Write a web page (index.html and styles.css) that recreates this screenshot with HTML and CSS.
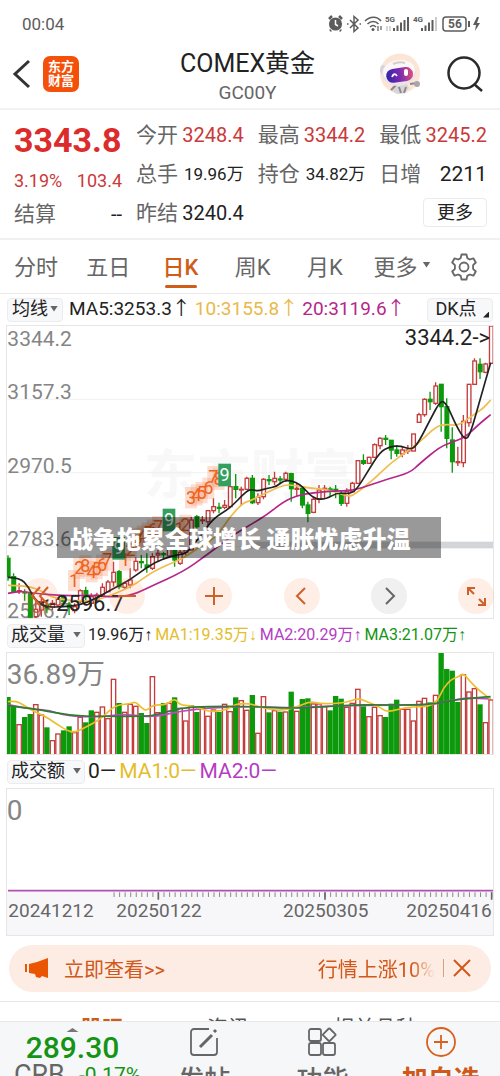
FILE: index.html
```html
<!DOCTYPE html>
<html lang="zh-CN">
<head>
  <meta charset="UTF-8" />
  <meta name="viewport" content="width=device-width, initial-scale=1.0"/>
  <title>COMEX黄金 GC00Y</title>
  <link rel="stylesheet" href="styles.css">
</head>
<body>
<div class="app">

  <!-- Status bar -->
  <div class="status">
    <span class="clock">00:04</span>
    <svg class="status-icons" width="154" height="18" viewBox="0 0 154 18" fill="none" stroke="#5c5c5c" stroke-width="1.5">
      <circle cx="7.500" cy="9" r="5.800" fill="#5c5c5c"/>
      <path d="M1 4l3-3M14 4l-3-3M3 15l-1 1M12 15l1 1" stroke-width="2.500"/>
      <path d="M7.500 5v4.500l2.500 1.500" stroke="#fff"/>
      <path d="M22 5l8 8-4 3.500V1.500l4 3.500-8 8M19 9h1.500M31.500 9h1.500"/>
      <path d="M37 6c5-5 12-5 16 0M39.500 9c3.500-3.500 8-3.500 11 0M42 12c2-2 4-2 6 0"/>
      <circle cx="45" cy="14.500" r="1.500" fill="#5c5c5c" stroke="none"/>
      <path d="M50 11v5M53 11v4" stroke-width="1.200"/>
      <text x="57" y="7">5G</text>
      <path d="M59 11v5M62 11v5" stroke="#bbb" stroke-width="1.200"/>
      <path d="M66 13v3M69.500 10.500V16M73 7.500V16M76.500 5V16M80 2V16" stroke-width="2"/>
      <text x="85" y="7">4G</text>
      <path d="M94 13v3M97.500 10.500V16M101 7.500V16M104.500 5V16" stroke-width="2"/>
      <path d="M108 2V16" stroke="#ccc" stroke-width="2"/>
      <rect x="115" y="2" width="23" height="14" rx="3"/>
      <text class="battery" x="120" y="13">56</text>
      <path d="M141 6v6" stroke-width="2"/>
      <path d="M149 2l-4 8h3l-1 6 5-8h-3l2-6z" fill="#5c5c5c" stroke="none"/>
    </svg>
  </div>

  <!-- Header -->
  <header class="header">
    <div class="header-side">
      <button class="icon-btn" aria-label="返回">
        <svg width="20" height="32" viewBox="0 0 20 32" fill="none" stroke="#333" stroke-width="3"><path d="M17 3L3 16l14 13"/></svg>
      </button>
      <span class="logo">东方<br>财富</span>
    </div>
    <div class="title">
      <h1>COMEX黄金</h1>
      <p>GC00Y</p>
    </div>
    <div class="header-side right">
      <button class="icon-btn" aria-label="智能助手">
        <svg width="42" height="42" viewBox="0 0 42 42">
          <defs>
            <linearGradient id="visor" x1="0" y1="0" x2="1" y2="0">
              <stop offset="0" stop-color="#3422a8"/>
              <stop offset="0.500" stop-color="#7a2ab0"/>
              <stop offset="1" stop-color="#e0507c"/>
            </linearGradient>
          </defs>
          <circle cx="21" cy="20.500" r="20" fill="#fde5d6"/>
          <path d="M14 33l5-3 9 1 2 4-4 5-8 1-5-3z" fill="#d8d5d8"/>
          <path d="M12 37l6-6M31 31l7-1M20 34l2 6M27 34l-2 6" stroke="#8c8890" stroke-width="2"/>
          <ellipse cx="4" cy="17" rx="3" ry="5" fill="#d9d3da"/>
          <ellipse cx="20" cy="20" rx="17" ry="13" transform="rotate(-8 20 20)" fill="#e9e3e7"/>
          <ellipse cx="20" cy="18" rx="16" ry="11" transform="rotate(-8 20 18)" fill="#faf7f8"/>
          <path d="M14 11q6-3 12-1" stroke="#d9cdbf" stroke-width="2" fill="none"/>
          <rect x="7" y="15" width="27" height="14" rx="7" transform="rotate(-8 20 21)" fill="url(#visor)"/>
          <path d="M13 24q2-5 5-1" stroke="#fff" stroke-width="1.800" fill="none"/>
          <rect x="25" y="16" width="4" height="7" rx="2" fill="#fff"/>
          <circle cx="38" cy="31" r="3" fill="#aaa6ac"/>
        </svg>
      </button>
      <button class="icon-btn" aria-label="搜索">
        <svg width="36" height="36" viewBox="0 0 36 36" fill="none" stroke="#2b2b2b" stroke-width="2.500"><circle cx="17" cy="17" r="15.500"/><path d="M27 28l8 7"/></svg>
      </button>
    </div>
  </header>

  <!-- Quote -->
  <section class="quote">
    <div class="quote-main">
      <div class="price">3343.8</div>
      <div class="change"><span>3.19%</span><span>103.4</span></div>
      <div class="cell"><span class="label">结算</span><span class="value">--</span></div>
    </div>
    <div class="quote-grid">
      <div class="cell"><span class="label">今开</span><span class="value up">3248.4</span></div>
      <div class="cell"><span class="label">最高</span><span class="value up">3344.2</span></div>
      <div class="cell"><span class="label">最低</span><span class="value up">3245.2</span></div>
      <div class="cell"><span class="label">总手</span><span class="value small">19.96万</span></div>
      <div class="cell"><span class="label">持仓</span><span class="value small">34.82万</span></div>
      <div class="cell"><span class="label">日增</span><span class="value large">2211</span></div>
      <div class="cell"><span class="label">昨结</span><span class="value">3240.4</span></div>
      <button class="more">更多</button>
    </div>
  </section>

  <!-- Period tabs -->
  <nav class="periods">
    <button>分时</button>
    <button>五日</button>
    <button class="active">日K</button>
    <button>周K</button>
    <button>月K</button>
    <button class="wide">更多<i class="caret"></i></button>
    <button class="gear" aria-label="设置">
      <svg width="28" height="28" viewBox="0 0 28 28" fill="none" stroke="#666" stroke-width="1.800" stroke-linejoin="round">
        <path d="M11.500 1.500h5l.8 3.600 2.500 1.400 3.600-1.200 2.400 4.200-2.700 2.600v3.800l2.700 2.600-2.400 4.200-3.600-1.200-2.500 1.400-.8 3.600h-5l-.8-3.600-2.500-1.400-3.600 1.200-2.400-4.200 2.700-2.600v-3.800L2.200 9.500l2.400-4.200 3.600 1.200 2.500-1.400z"/>
        <circle cx="14" cy="14" r="4.500"/>
      </svg>
    </button>
  </nav>

  <!-- Price chart -->
  <div class="bar">
    <button class="pill">均线<i class="caret"></i></button>
    <span>MA5:3253.3↑</span>
    <span class="yellow">10:3155.8↑</span>
    <span class="magenta">20:3119.6↑</span>
    <button class="pill dk">DK点<i class="corner"></i></button>
  </div>
  <div class="chart">
    <svg id="price-chart" viewBox="18 15 1464 882">
      <text class="watermark" x="432" y="522">东方财富</text>
      <path class="grid-line" d="M18 238H1482M18 458H1482M18 680H1482"/>
      <rect x="750" y="665" width="732" height="20" fill="#d3d6d9"/>
      <g class="scale">
        <text x="22" y="77">3344.2</text>
        <text x="22" y="238">3157.3</text>
        <text x="22" y="458">2970.5</text>
        <text x="22" y="679">2783.6</text>
        <text x="22" y="893">2596.7</text>
      </g>
      <g id="candles"></g>
      <g id="price-lines"></g>
      <g id="signals"></g>
      <text class="mark" x="1470" y="75" text-anchor="end">3344.2-&gt;</text>
      <text class="mark" x="116" y="874">&lt;-2596.7</text>
    </svg>
    <div class="chart-tools">
      <button aria-label="快退"><svg viewBox="0 0 36 36"><path d="M18 9l-8 9 8 9M26 9l-8 9 8 9"/></svg></button>
      <button aria-label="缩小"><svg viewBox="0 0 36 36"><path d="M9 18h18"/></svg></button>
      <button aria-label="放大"><svg viewBox="0 0 36 36"><path d="M9 18h18M18 9v18"/></svg></button>
      <button aria-label="左移"><svg viewBox="0 0 36 36"><path d="M21 10l-8 8 8 8"/></svg></button>
      <button class="gray" aria-label="右移"><svg viewBox="0 0 36 36"><path d="M15 10l8 8-8 8"/></svg></button>
      <button aria-label="全屏"><svg viewBox="0 0 36 36"><path d="M10 17v-7h7M10 10l6 6M27 20v7h-7M27 27l-6-6"/></svg></button>
    </div>
    <div class="caption">战争拖累全球增长 通胀忧虑升温</div>
  </div>

  <!-- Volume -->
  <div class="bar volume-bar">
    <button class="pill wide">成交量<i class="caret"></i></button>
    <span>19.96万<b>↑</b></span>
    <span class="gold">MA1:19.35万<b>↓</b></span>
    <span class="violet">MA2:20.29万<b>↑</b></span>
    <span class="green">MA3:21.07万<b>↑</b></span>
  </div>
  <div class="chart">
    <svg id="volume-chart" viewBox="18 97 1464 310">
      <g id="volumes"></g>
      <g id="volume-lines"></g>
      <text class="scale-big" x="20" y="193">36.89万</text>
    </svg>
  </div>

  <!-- Turnover -->
  <div class="bar amount-bar">
    <button class="pill wide">成交额<i class="caret"></i></button>
    <span>0—</span>
    <span class="gold">MA1:0—</span>
    <span class="violet">MA2:0—</span>
  </div>
  <div class="chart">
    <svg id="amount-chart" viewBox="18 25 1464 443">
      <rect x="18" y="334" width="1464" height="134" fill="#f7f7fa"/>
      <path d="M24 333H1482" stroke="#b050b0" stroke-width="5"/>
      <text class="scale-big" x="20" y="121">0</text>
      <g id="ticks"></g>
      <g class="dates">
        <text x="25" y="412">20241212</text>
        <text x="349" y="412">20250122</text>
        <text x="849" y="412">20250305</text>
        <text x="1475" y="412" text-anchor="end">20250416</text>
      </g>
    </svg>
  </div>

  <!-- Notice -->
  <div class="notice">
    <svg width="26" height="22" viewBox="0 0 26 22" fill="#ea5504"><path d="M1 7h2v8H1zM5 7l8-2 11-4v20l-6-2-2 2-4-1-1-3-6-1z"/></svg>
    <a href="#">立即查看&gt;&gt;</a>
    <span class="notice-text">行情上涨10%</span>
    <button class="icon-btn close" aria-label="关闭">
      <svg width="18" height="18" viewBox="0 0 18 18" stroke="#d0581a" stroke-width="2"><path d="M1 1l16 16M17 1L1 17"/></svg>
    </button>
  </div>

  <nav class="sections">
    <a class="active" href="#">股吧</a>
    <a href="#">资讯</a>
    <a href="#">相关品种</a>
  </nav>

  <!-- Bottom bar -->
  <footer class="bottom">
    <div class="index">
      <i class="up-caret"></i>
      <div class="index-value">289.30</div>
      <div class="index-row"><span>CRB</span><span class="pct">-0.17%</span></div>
    </div>
    <button>
      <svg width="30" height="30" viewBox="0 0 30 30" fill="none" stroke="#666" stroke-width="1.800"><path d="M20 2H5a3 3 0 0 0-3 3v20a3 3 0 0 0 3 3h20a3 3 0 0 0 3-3V11"/><path d="M11 20L23 8M25 5l2-2" stroke-width="3"/></svg>
      发帖
    </button>
    <button>
      <svg width="30" height="30" viewBox="0 0 30 30" fill="none" stroke="#666" stroke-width="1.800"><rect x="2" y="2" width="12" height="12" rx="2"/><rect x="2" y="16" width="12" height="12" rx="2"/><rect x="16" y="16" width="12" height="12" rx="2"/><rect x="17.500" y="3" width="9.500" height="9.500" rx="1" transform="rotate(45 22.250 7.750)"/></svg>
      功能
    </button>
    <button class="add">
      <svg width="30" height="30" viewBox="0 0 30 30" fill="none" stroke="#d9601f" stroke-width="1.800"><circle cx="15" cy="15" r="14"/><path d="M8 15h14M15 8v14"/></svg>
      加自选
    </button>
  </footer>
</div>

<script>
  const GREEN = '#0c9a0c';
  const RED = '#c43c3c';
  const STEP = 16.66;

  // g = down, r = up; high, body top, body bottom, low
  const candles = `g 706 715 770 782|g 760 770 815 818|r 790 812 814 822|g 808 817 819 842|g 815 820 895 895|r 840 868 890 898
r 835 845 870 890|g 845 855 865 880|r 840 850 862 870|r 832 838 855 860|g 828 832 845 860|g 845 855 862 885|r 850 860 872 880
r 808 812 845 850|g 800 812 830 845|r 820 830 850 860|r 818 825 840 845|r 790 802 825 830|r 780 786 815 815|r 725 757 786 800
g 750 755 800 808|r 785 790 802 810|r 745 780 795 805|r 712 724 750 755|g 705 725 728 745|g 700 735 742 758|r 700 710 745 750
r 690 700 705 725|g 695 701 704 720|r 680 688 708 710|g 680 688 720 740|r 690 697 730 735|r 685 690 697 705|r 590 600 690 690
g 585 590 620 630|r 588 600 602 612|r 570 572 605 615|r 535 560 572 580|g 548 562 565 580|r 540 556 562 568|r 498 500 560 565
g 462 500 508 535|r 500 508 510 558|r 470 475 508 510|g 465 475 548 552|r 520 532 548 555|r 475 478 530 538|g 465 479 482 495
r 455 475 485 495|g 468 477 480 490|r 455 460 478 485|g 458 461 506 545|r 490 505 508 530|g 500 505 555 565|g 545 555 580 607
r 530 538 577 580|r 495 510 538 550|r 495 505 508 535|g 500 507 510 530|g 495 508 512 535|g 510 520 550 558|r 505 515 550 560
r 485 490 515 515|r 422 422 490 490|g 403 422 430 435|r 410 412 430 430|r 370 374 412 412|r 352 355 377 388|g 345 355 358 375
g 360 361 390 418|g 375 390 400 410|r 380 390 402 412|r 375 390 393 402|r 342 342 393 393|r 278 284 307 307|r 235 238 284 290
g 215 238 245 270|r 187 198 250 255|g 193 193 260 335|g 235 260 355 385|g 322 360 425 458|r 380 425 428 438|r 285 304 428 442
r 193 193 308 320|r 115 123 193 193|g 115 133 155 177|r 128 132 157 160|r 18 18 130 130`.split(/[|\n]/);

  const volumes = `g232 g262 r314 g292 g283 r254 r285 g323 r362 r342 g332 g320 r338 r292 g308 g272 r277 r261 r296 r178 g250 r277
r253 r259 g280 g310 r170 r278 g250 r250 g233 r265 r303 r258 g277 r262 r289 r270 g277 r253 r275 g233 r242 r271
g226 r340 r230 g278 r272 g276 r276 g216 r274 g238 g236 r252 r252 r260 g272 g229 g237 r262 r250 r208 g260 r290
r262 r287 g292 g252 g240 r268 r268 r303 r244 r235 g248 r226 g99 g148 g153 g247 r164 r216 r206 g254 r308 r240`.split(/\s+/);

  const priceLines = {
    '#f0bd4e': '24,796 80,796 130,815 160,835 250,845 310,835 370,810 410,790 450,760 500,735 550,715 600,680 650,650 690,590 730,548 750,543 800,518 850,495 880,495 930,505 980,508 1010,518 1050,530 1065,522 1120,480 1170,430 1230,388 1260,365 1310,318 1340,313 1375,317 1420,285 1450,265 1472,240',
    '#b5268c': '24,820 60,812 100,820 200,828 280,825 340,832 400,825 450,800 550,755 620,705 700,645 750,615 800,585 850,545 890,527 940,518 1000,513 1060,512 1110,495 1160,478 1230,458 1260,430 1320,380 1360,365 1395,352 1440,310 1472,284',
    '#222': '24,772 60,773 85,800 105,840 140,862 190,860 240,855 290,835 340,805 390,780 440,742 490,715 540,703 560,700 600,650 640,595 690,565 740,512 757,509 775,513 800,505 830,500 855,478 900,490 940,538 980,537 1010,518 1050,522 1070,508 1100,460 1140,395 1170,380 1200,377 1230,388 1250,378 1290,300 1322,240 1340,252 1370,320 1395,360 1410,345 1440,240 1472,128'
  };

  const volumeLines = {
    '#b94cc0': '24,255 90,268 150,272 200,290 300,292 370,283 420,290 470,290 540,275 620,265 750,260 870,265 1000,258 1200,256 1290,256 1340,245 1400,234 1472,238',
    '#ecc02c': '24,246 45,243 70,255 100,275 130,286 165,310 200,332 220,338 240,332 290,305 310,290 345,257 390,252 407,246 425,265 440,274 457,256 500,255 524,236 540,256 570,258 600,265 625,275 650,275 680,270 710,252 750,252 775,260 810,270 850,272 890,262 930,245 960,252 1000,252 1040,248 1075,235 1110,250 1140,262 1160,278 1210,265 1240,262 1290,260 1315,240 1330,205 1355,178 1375,172 1390,160 1410,185 1440,215 1472,238',
    '#2e7d32': '24,258 120,270 210,288 300,290 440,290 470,285 540,265 620,260 750,260 860,266 960,263 1070,255 1150,256 1240,256 1310,252 1370,240 1430,234 1472,231'
  };

  // text, centre x, centre y
  const signals = [
    [1, 222, 782], [2, 238, 745], [8, 256, 738], [4, 275, 755], [5, 290, 746], [6, 306, 736], [7, 322, 720],
    [1, 375, 720], [2, 392, 690], [3, 413, 655], [4, 428, 648], [5, 443, 640], [6, 458, 630], [7, 474, 620],
    [1, 538, 628], [2, 556, 616], [3, 573, 533], [4, 590, 525], [5, 605, 518], [6, 625, 505], [7, 640, 470], [8, 656, 478],
    [9, 356, 685], [9, 507, 600], [9, 674, 465]
  ];

  const put = (id, html) => document.getElementById(id).innerHTML = html;

  function drawCandles() {
    put('candles', candles.map((row, i) => {
      const [type, ...v] = row.split(' ');
      const [high, top, bottom, low] = v.map(Number);
      const x = 24 + i * STEP;
      const color = type === 'g' ? GREEN : RED;
      const fill = type === 'g' ? GREEN : 'none';
      return `<path d="M${x} ${high}V${top}M${x} ${bottom}V${low}" stroke="${color}" stroke-width="4"/>
        <rect x="${x - 5}" y="${top}" width="11" height="${bottom - top}" fill="${fill}" stroke="${color}" stroke-width="4"/>`;
    }).join(''));
  }

  function drawVolumes() {
    put('volumes', volumes.map((row, i) => {
      const top = Number(row.slice(1));
      const x = 24 + i * STEP;
      if (row[0] === 'g') {
        return `<rect x="${x - 8}" y="${top}" width="16" height="${407 - top}" fill="${GREEN}"/>`;
      }
      return `<rect x="${x - 6.5}" y="${top + 1}" width="13" height="${404 - top}" fill="#fff" stroke="${RED}" stroke-width="4"/>`;
    }).join(''));
  }

  // smooth curve through the midpoints
  function curve(points) {
    const p = points.split(' ').map(s => s.split(',').map(Number));
    let d = `M${p[0]}`;
    for (let i = 1; i < p.length - 1; i++) {
      d += `Q${p[i]} ${(p[i][0] + p[i + 1][0]) / 2},${(p[i][1] + p[i + 1][1]) / 2}`;
    }
    return d + `L${p[p.length - 1]}`;
  }

  function drawLines(id, lines) {
    put(id, Object.entries(lines).map(([color, points]) =>
      `<path d="${curve(points)}" fill="none" stroke="${color}" stroke-width="5"/>`).join(''));
  }

  function drawSignals() {
    const boxes = signals.filter(s => s[0] !== 9).map(([, x, y]) =>
      `<rect x="${x - 18}" y="${y - 32}" width="36" height="64" fill="#f98a58" opacity="0.28"/>`);
    const digits = signals.map(([n, x, y]) => n === 9
      ? `<rect x="${x - 19}" y="${y - 34}" width="38" height="68" fill="#34a060"/><text class="nine" x="${x}" y="${y + 17}">9</text>`
      : `<text class="digit" x="${x}" y="${y + 18}">${n}</text>`);
    put('signals', boxes.join('') + digits.join(''));
  }

  function drawTicks() {
    let d = '';
    for (let i = 0; i <= 68; i++) {
      d += `M${1475 - i * STEP} 338v14`;
    }
    put('ticks', `<path d="${d}" stroke="#888" stroke-width="3"/>
      <path d="M475 338v22M975 338v22M1475 338v22" stroke="#666" stroke-width="5"/>`);
  }

  drawCandles();
  drawVolumes();
  drawLines('price-lines', priceLines);
  drawLines('volume-lines', volumeLines);
  drawSignals();
  drawTicks();
</script>
</body>
</html>
```
FILE: styles.css
```css
* {
  box-sizing: border-box;
}

body {
  margin: 0;
  background: #fff;
  color: #222;
  font-family: Roboto, "Noto Sans CJK SC", sans-serif;
}

button {
  padding: 0;
  border: none;
  background: none;
  color: inherit;
  font: inherit;
  cursor: pointer;
}

a {
  color: inherit;
  text-decoration: none;
}

svg {
  display: block;
}

.app {
  display: flex;
  flex-direction: column;
  height: 100vh;
  overflow: hidden;
}

.app > * {
  flex-shrink: 0;
}

/* Status bar */
.status {
  display: flex;
  align-items: center;
  justify-content: space-between;
  height: 40px;
  padding: 8px 18px 0 22px;
}

.clock {
  color: #5c5c5c;
  font-size: 17px;
}

.status-icons text {
  fill: #5c5c5c;
  stroke: none;
  font-size: 8px;
  font-weight: bold;
}

.status-icons .battery {
  font-size: 12px;
}

/* Header */
.header {
  display: flex;
  align-items: center;
  height: 70px;
  padding: 0 17px 0 12px;
  border-bottom: 2px solid #f2f2f2;
}

.header-side {
  display: flex;
  flex: 1;
  align-items: center;
  gap: 11px;
}

.header-side.right {
  justify-content: flex-end;
  gap: 26px;
}

.logo {
  width: 36px;
  height: 36px;
  padding-top: 4px;
  border-radius: 7px;
  background: #f4500a;
  color: #fff;
  font-size: 13px;
  font-weight: bold;
  line-height: 14px;
  text-align: center;
}

.title {
  padding-top: 5px;
  text-align: center;
}

.title h1 {
  margin: 0;
  font-size: 25px;
  font-weight: normal;
  line-height: 32px;
}

.title p {
  margin: 0;
  color: #666;
  font-size: 19px;
  line-height: 26px;
}

/* Quote */
.quote {
  display: grid;
  grid-template-columns: 108px 1fr;
  column-gap: 14px;
  padding: 5px 13px 6px 14px;
  border-bottom: 2px solid #f0f0f0;
}

.quote-main {
  display: grid;
  grid-template-rows: 50px 30px 37px;
  align-items: center;
}

.price {
  color: #dc2b2b;
  font-size: 34px;
  font-weight: bold;
}

.change {
  display: flex;
  justify-content: space-between;
  color: #c93a3a;
  font-size: 18px;
}

.quote-grid {
  display: grid;
  grid-template-columns: repeat(3, 1fr);
  grid-auto-rows: 39px;
  column-gap: 14px;
  align-items: center;
}

.cell {
  display: flex;
  align-items: center;
  justify-content: space-between;
  white-space: nowrap;
}

.label {
  color: #666;
  font-size: 21px;
  line-height: 28px;
}

.value {
  font-size: 20px;
  line-height: 28px;
}

.value.up {
  color: #c93a3a;
}

.value.small {
  font-size: 17px;
}

.value.large {
  font-size: 21px;
}

.more {
  grid-column: 3;
  justify-self: end;
  width: 64px;
  height: 29px;
  border: 1px solid #ebebeb;
  border-radius: 4px;
  font-size: 18px;
  line-height: 24px;
}

/* Period tabs */
.periods {
  display: flex;
  height: 54px;
  border-bottom: 1px solid #ececec;
  color: #666;
  font-size: 22px;
}

.periods button {
  display: flex;
  position: relative;
  flex: 1;
  align-items: center;
  justify-content: center;
  padding-bottom: 4px;
}

.periods .wide {
  flex: 0 0 82px;
}

.periods .gear {
  flex: 0 0 57px;
  justify-content: flex-start;
  padding: 0 0 0 7px;
}

.periods .active {
  color: #cf5c17;
  font-weight: 500;
}

.periods .active::after {
  content: "";
  position: absolute;
  bottom: 5px;
  width: 32px;
  height: 3px;
  border-radius: 2px;
  background: #cf5c17;
}

.caret {
  width: 8px;
  height: 6px;
  margin-left: 5px;
  background: #666;
  clip-path: polygon(0 0, 100% 0, 50% 100%);
}

/* Indicator rows */
.bar {
  display: flex;
  align-items: center;
  gap: 4px;
  height: 31px;
  padding: 0 7px;
  font-size: 19px;
  line-height: 24px;
  white-space: nowrap;
}

.bar span {
  padding-bottom: 2px;
}

.pill {
  display: flex;
  position: relative;
  align-items: center;
  justify-content: center;
  width: 56px;
  height: 24px;
  margin-right: 2px;
  padding-bottom: 2px;
  border: 1px solid #ececee;
  border-radius: 4px;
  background: #f7f8fa;
  font-size: 18px;
}

.pill .caret {
  margin-left: 2px;
}

.pill.wide {
  width: 78px;
  margin-right: 0;
}

.pill.wide .caret {
  margin-left: 8px;
}

.pill.dk {
  width: 66px;
  margin-right: 0;
  margin-left: auto;
  padding-right: 8px;
}

.corner {
  position: absolute;
  right: 3px;
  bottom: 3px;
  width: 6px;
  height: 6px;
  background: #222;
  clip-path: polygon(100% 0, 100% 100%, 0 100%);
}

.volume-bar {
  gap: 3px;
  height: 33px;
  font-size: 16px;
}

.volume-bar b {
  font-family: "Liberation Sans", sans-serif;
  font-weight: normal;
}

.amount-bar {
  gap: 3px;
  height: 33px;
  font-size: 21px;
}

.yellow {
  color: #e9b949;
}

.magenta {
  color: #b5268c;
}

.gold {
  color: #e3bd2c;
}

.violet {
  color: #b53cc4;
}

.green {
  color: #149414;
}

/* Charts */
.chart {
  position: relative;
  margin: 0 6px;
  outline: 1px solid #e6e6e8;
  outline-offset: -1px;
}

.chart svg {
  width: 100%;
}

.chart text {
  fill: #222;
}

.chart .scale text {
  fill: #858585;
  font-size: 63px;
}

.chart .scale-big {
  fill: #858585;
  font-size: 84px;
}

.chart .mark {
  font-size: 66px;
}

.chart .watermark {
  fill: #f8f8f8;
  font-size: 160px;
  font-weight: bold;
}

.chart .dates text {
  fill: #666;
  font-size: 57px;
}

.chart .digit {
  fill: #ee6420;
  font-size: 54px;
  text-anchor: middle;
}

.chart .nine {
  fill: #fff;
  font-size: 54px;
  text-anchor: middle;
}

.grid-line {
  stroke: #ececec;
  stroke-width: 2;
}

.chart-tools {
  display: flex;
  position: absolute;
  right: 0;
  bottom: 5px;
  left: 16px;
  justify-content: space-between;
}

.chart-tools button {
  width: 36px;
  height: 36px;
  border-radius: 50%;
  background: rgba(250, 120, 60, 0.13);
}

.chart-tools path {
  fill: none;
  stroke: #d0602a;
  stroke-width: 2;
}

.chart-tools .gray {
  background: #f0f0f0;
}

.chart-tools .gray path {
  stroke: #666;
}

.caption {
  position: absolute;
  top: 192px;
  left: 51px;
  padding: 0 30px 0 12px;
  background: rgba(0, 0, 0, 0.4);
  color: #fff;
  font-family: "Noto Sans CJK SC", sans-serif;
  font-size: 24px;
  font-weight: 900;
  line-height: 41px;
  white-space: nowrap;
}

/* Notice */
.notice {
  display: flex;
  align-items: center;
  height: 47px;
  margin: 9px 9px;
  padding: 0 20px 0 15px;
  border-radius: 24px;
  background: #fdece3;
  color: #d0581a;
  font-size: 20px;
}

.notice a {
  margin-left: 14px;
}

.notice-text {
  margin-left: auto;
  -webkit-mask-image: linear-gradient(to right, #000 80%, transparent);
  mask-image: linear-gradient(to right, #000 80%, transparent);
}

.close {
  margin-left: 8px;
  padding-left: 9px;
  border-left: 1px solid #d9a07c;
}

.sections {
  display: flex;
  justify-content: space-between;
  height: 20px;
  padding: 16px 83px 0 81px;
  overflow: hidden;
  border-top: 1px solid #e6e6e6;
  color: #555;
  font-size: 21px;
  line-height: 21px;
}

.sections .active {
  color: #cf5c17;
  font-weight: bold;
}

/* Bottom bar */
.bottom {
  display: flex;
  height: 78px;
  border-top: 1px solid #e6e8ea;
  background: #f6f7f9;
  color: #666;
}

.index {
  display: flex;
  flex: 0 0 145px;
  flex-direction: column;
  align-items: center;
  padding-top: 6px;
}

.up-caret {
  width: 12px;
  height: 4px;
  background: #777;
  clip-path: polygon(50% 0, 100% 100%, 0 100%);
}

.index-value {
  color: #149414;
  font-size: 30px;
  font-weight: 500;
  line-height: 32px;
}

.index-row {
  display: flex;
  align-items: center;
  gap: 14px;
  padding-left: 10px;
  font-size: 27px;
  line-height: 22px;
}

.pct {
  color: #149414;
  font-size: 21px;
}

.bottom button {
  display: flex;
  flex: 1;
  flex-direction: column;
  align-items: center;
  gap: 9px;
  padding-top: 5px;
  font-size: 26px;
  font-weight: 500;
  line-height: 28px;
}

.bottom .add {
  color: #d0581a;
  font-weight: bold;
}
```
